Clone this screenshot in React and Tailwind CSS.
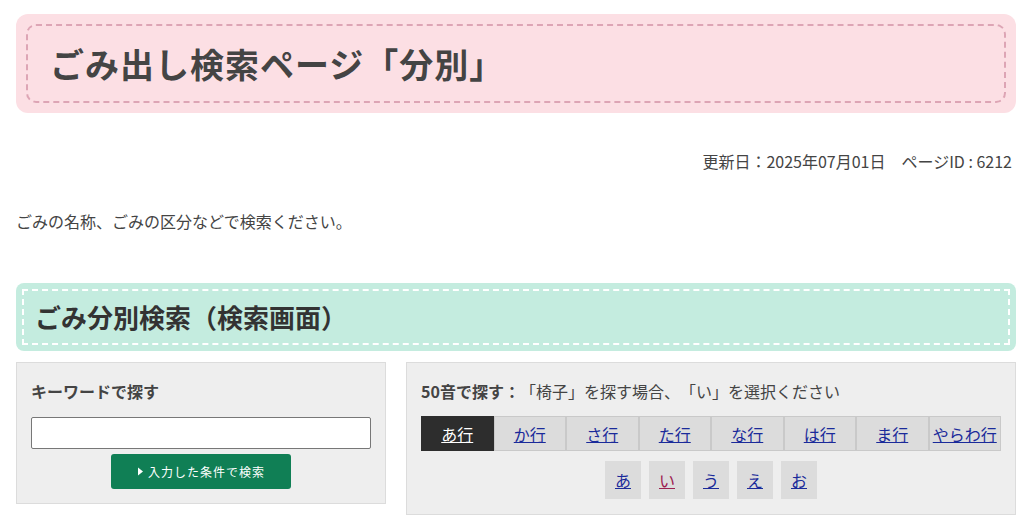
import React from 'react';

const gyo = ['あ行', 'か行', 'さ行', 'た行', 'な行', 'は行', 'ま行', 'やらわ行'];
const kana = ['あ', 'い', 'う', 'え', 'お'];

export default function App() {
  return (
    <div className="w-[1028px] h-[528px] overflow-hidden bg-white pl-4 pr-3 pt-[14px] text-[#444] [text-spacing-trim:space-all] font-['Noto_Sans_CJK_JP','Noto_Sans',sans-serif]">
      <div className="bg-[#fcdfe4] rounded-[12px] p-[10px] h-[99px]">
        <div className="h-full border-2 border-dashed border-[#dda5b5] rounded-[10px] flex items-center pl-[22px]">
          <h1 className="text-[34px] font-bold leading-none tracking-[1px] pt-[1px]">ごみ出し検索ページ「分別」</h1>
        </div>
      </div>

      <p className="mt-[37px] text-right text-[16px] leading-[22px] pr-[4px]">更新日：2025年07月01日　ページID : 6212</p>

      <p className="mt-[38px] text-[16px] leading-[22px]">ごみの名称、ごみの区分などで検索ください。</p>

      <div className="mt-[51px] bg-[#c4ecdf] rounded-[8px] p-[6px] h-[68px]">
        <div className="h-full border-2 border-dashed border-white flex items-center pl-[11px]">
          <h2 className="text-[26px] font-bold leading-none text-[#333]">ごみ分別検索（検索画面）</h2>
        </div>
      </div>

      <div className="mt-[11px] flex items-start gap-[20px]">
        <div className="w-[370px] h-[142px] bg-[#eeeeee] border border-[#dcdcdc] px-[14px] pt-[17px]">
          <h3 className="text-[16px] font-bold leading-[22px]">キーワードで探す</h3>
          <input type="text" className="mt-[15px] block w-[340px] h-[32px] bg-white border border-[#777] rounded-[2px] outline-none" />
          <div className="mt-[5px] flex justify-center">
            <button className="w-[180px] h-[35px] bg-[#107f55] rounded-[3px] text-white text-[12px] tracking-[1px] flex items-center justify-center gap-[4px]">
              <svg width="7" height="9" viewBox="0 0 7 9"><path d="M1 0.5 L6 4.5 L1 8.5 Z" fill="white" /></svg>
              入力した条件で検索
            </button>
          </div>
        </div>

        <div className="w-[610px] h-[153px] bg-[#eeeeee] border border-[#dcdcdc] px-[14px] pt-[17px]">
          <p className="text-[16px] leading-[22px]"><span className="font-bold">50音で探す：</span>「椅子」を探す場合、「い」を選択ください</p>
          <div className="mt-[14px] flex w-[580px]">
            {gyo.map((g, i) => (
              <a key={g} href="#" className={`flex-1 h-[35px] flex items-center justify-center text-[16px] underline border ${i === 0 ? 'bg-[#2d2d2d] border-[#2d2d2d] text-white' : 'bg-[#dcdcdc] border-[#c9c9c9] text-[#1a2a9a]'}`}>{g}</a>
            ))}
          </div>
          <div className="mt-[10px] flex justify-center gap-[8px]">
            {kana.map((k) => (
              <a key={k} href="#" className={`w-[36px] h-[38px] bg-[#dcdcdc] flex items-center justify-center text-[16px] underline ${k === 'い' ? 'text-[#9c2050]' : 'text-[#1a2a9a]'}`}>{k}</a>
            ))}
          </div>
        </div>
      </div>
    </div>
  );
}
